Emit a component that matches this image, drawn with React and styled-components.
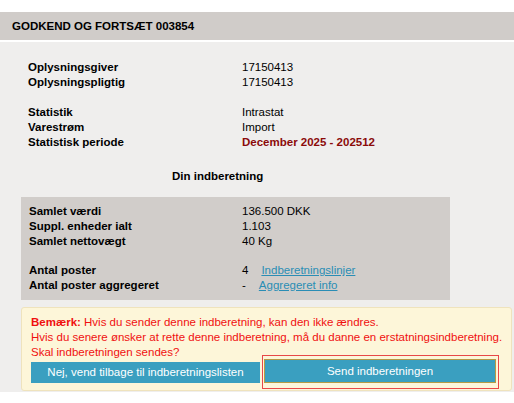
import React from "react";
import styled, { createGlobalStyle } from "styled-components";

const Global = createGlobalStyle`
  html, body { margin: 0; padding: 0; background: #ffffff; }
  body { font-family: "Liberation Sans", Arial, sans-serif; font-size: 11.5px; color: #000; }
`;

const Page = styled.div`
  padding-top: 12px;
`;

const Header = styled.div`
  height: 28px;
  line-height: 28px;
  background: #d0ccc9;
  padding-left: 12px;
  font-weight: bold;
  font-size: 11.5px;
  border-bottom: 2px solid #ffffff;
`;

const Body = styled.div`
  background: #efeeed;
  padding: 18px 2px 1px 21px;
`;

const InfoGrid = styled.div`
  display: grid;
  grid-template-columns: ${(p) => p.$labelWidth}px 1fr;
  padding-left: ${(p) => p.$indent}px;
  line-height: 15px;
`;

const Label = styled.div`
  font-weight: bold;
`;

const Value = styled.div`
  color: ${(p) => (p.$period ? "#8b0a0a" : "#000")};
  font-weight: ${(p) => (p.$period ? "bold" : "normal")};
`;

const Spacer = styled.div`
  grid-column: 1 / -1;
  height: ${(p) => p.$h}px;
`;

const SectionTitle = styled.div`
  font-weight: bold;
  line-height: 15px;
  margin: 19px 0 13px;
  padding-left: 151px;
`;

const SummaryBox = styled.div`
  width: 429px;
  background: #d1cdca;
  padding: 7px 0 7px 0;
`;

const LinkRow = styled.div`
  display: flex;
`;

const Link = styled.a`
  color: #2a8db5;
  text-decoration: underline;
  margin-left: ${(p) => p.$offset}px;
  cursor: pointer;
`;

const Warning = styled.div`
  margin-top: 7px;
  width: 478px;
  background: #fdf6d9;
  border: 1px solid #efe3bd;
  border-radius: 3px;
  padding: 7px 2px 1px 9px;
  color: #f01010;
  line-height: 15px;
  white-space: nowrap;
`;

const Strong = styled.span`
  font-weight: bold;
`;

const ButtonRow = styled.div`
  display: flex;
  align-items: center;
  gap: 2px;
  margin-top: -5px;
`;

const Button = styled.button`
  width: ${(p) => p.$w}px;
  height: ${(p) => p.$h}px;
  background: #3a9fc0;
  color: #ffffff;
  border: ${(p) => (p.$focused ? "1px solid #b59a45" : "none")};
  font-family: "Liberation Sans", Arial, sans-serif;
  font-size: 11.5px;
  padding: 0;
  cursor: pointer;
`;

const FocusRing = styled.span`
  display: inline-flex;
  border: 1px solid #e84848;
  padding: 3px 2px 5px 1px;
`;

export default function App() {
  return (
    <Page>
      <Global />
      <Header>GODKEND OG FORTSÆT 003854</Header>
      <Body>
        <InfoGrid $labelWidth={214} $indent={7}>
          <Label>Oplysningsgiver</Label>
          <Value>17150413</Value>
          <Label>Oplysningspligtig</Label>
          <Value>17150413</Value>
          <Spacer $h={15} />
          <Label>Statistik</Label>
          <Value>Intrastat</Value>
          <Label>Varestrøm</Label>
          <Value>Import</Value>
          <Label>Statistisk periode</Label>
          <Value $period>December 2025 - 202512</Value>
        </InfoGrid>
        <SectionTitle>Din indberetning</SectionTitle>
        <SummaryBox>
          <InfoGrid $labelWidth={213} $indent={8}>
            <Label>Samlet værdi</Label>
            <Value>136.500 DKK</Value>
            <Label>Suppl. enheder ialt</Label>
            <Value>1.103</Value>
            <Label>Samlet nettovægt</Label>
            <Value>40 Kg</Value>
            <Spacer $h={14} />
            <Label>Antal poster</Label>
            <LinkRow>
              4<Link $offset={13}>Indberetningslinjer</Link>
            </LinkRow>
            <Label>Antal poster aggregeret</Label>
            <LinkRow>
              -<Link $offset={13}>Aggregeret info</Link>
            </LinkRow>
          </InfoGrid>
        </SummaryBox>
        <Warning>
          <div>
            <Strong>Bemærk:</Strong> Hvis du sender denne indberetning, kan den ikke ændres.
          </div>
          <div>Hvis du senere ønsker at rette denne indberetning, må du danne en erstatningsindberetning.</div>
          <div>Skal indberetningen sendes?</div>
          <ButtonRow>
            <Button $w={229} $h={21}>Nej, vend tilbage til indberetningslisten</Button>
            <FocusRing>
              <Button $w={232} $h={24} $focused>Send indberetningen</Button>
            </FocusRing>
          </ButtonRow>
        </Warning>
      </Body>
    </Page>
  );
}
